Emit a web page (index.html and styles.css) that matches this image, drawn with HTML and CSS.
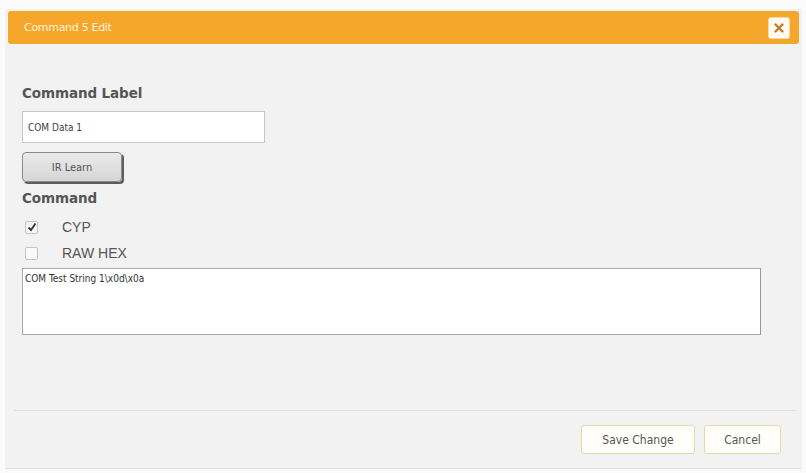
FILE: index.html
```html
<!DOCTYPE html>
<html lang="en">
<head>
    <meta charset="UTF-8">
    <title>Command 5 Edit</title>
    <link rel="stylesheet" href="styles.css">
</head>
<body>
    <div class="dialog">
        <div class="dialog-title">
            <span>Command 5 Edit</span>
            <button class="close-btn" title="Close">
                <svg width="12" height="12" viewBox="0 0 12 12">
                    <path d="M2.5 2.5 L9.5 9.5 M9.5 2.5 L2.5 9.5" stroke="#c9772a" stroke-width="2.4" stroke-linecap="round"/>
                </svg>
            </button>
        </div>

        <div class="dialog-body">
            <label class="field-label">Command Label</label>
            <input class="text-input" type="text" value="COM Data 1">

            <button class="learn-btn">IR Learn</button>

            <label class="field-label command-label">Command</label>
            <div class="check-row first">
                <span class="check checked">
                    <svg width="10" height="10" viewBox="0 0 10 10">
                        <path d="M1.5 5.5 L4 8 L8.5 1.5" stroke="#333" stroke-width="1.8" fill="none"/>
                    </svg>
                </span>
                <span>CYP</span>
            </div>
            <div class="check-row">
                <span class="check"></span>
                <span>RAW HEX</span>
            </div>

            <textarea class="command-text">COM Test String 1\x0d\x0a</textarea>
        </div>

        <div class="dialog-footer">
            <button class="footer-btn save">Save Change</button>
            <button class="footer-btn cancel">Cancel</button>
        </div>
    </div>
</body>
</html>
```

FILE: styles.css
```css
body {
    margin: 0;
    background: #fbfbfb;
    font-family: "DejaVu Sans", Verdana, sans-serif;
    color: #444;
}
.dialog {
    margin: 9px 4px 0 5px;
    height: 459px;
    background: #f2f2f2;
    border-bottom: 1px solid #e2e2e2;
    display: flex;
    flex-direction: column;
}
.dialog-title {
    margin: 2px 3px 0 3px;
    height: 33px;
    background: #f5a72b;
    border-radius: 3px;
    display: flex;
    align-items: center;
    justify-content: space-between;
    padding: 0 9px 0 16px;
    color: #fdf1dc;
    font-size: 11px;
    letter-spacing: -0.3px;
}
.close-btn {
    width: 22px;
    height: 22px;
    border: 1px solid #f8d9a8;
    border-radius: 3px;
    background: #fffaf2;
    padding: 0;
    display: flex;
    align-items: center;
    justify-content: center;
}
.dialog-body {
    padding: 41px 0 0 17px;
    display: flex;
    flex-direction: column;
    align-items: flex-start;
    flex: 1;
}
.field-label {
    font-size: 13.5px;
    font-weight: bold;
    color: #555;
    letter-spacing: -0.1px;
}
.text-input {
    margin-top: 10px;
    width: 243px;
    height: 32px;
    box-sizing: border-box;
    border: 1px solid #c8c8c8;
    background: #fff;
    padding: 0 5px;
    font-family: "DejaVu Sans Condensed", "DejaVu Sans", sans-serif;
    font-size: 10px;
    color: #444;
}
.learn-btn {
    margin-top: 9px;
    width: 100px;
    height: 30px;
    border: 1px solid #8a8a8a;
    border-radius: 4px;
    background: linear-gradient(#eaeaea, #d6d6d6);
    box-shadow: 2px 2px 0 #5e5e5e;
    font-family: "DejaVu Sans Condensed", "DejaVu Sans", sans-serif;
    font-size: 11px;
    color: #555;
}
.command-label {
    margin-top: 8px;
}
.check-row {
    display: flex;
    align-items: center;
    gap: 24px;
    height: 26px;
    padding-left: 3px;
    font-family: "Liberation Sans", Arial, sans-serif;
    font-size: 14px;
    color: #555;
}
.check-row.first {
    margin-top: 8px;
}
.check {
    width: 11px;
    height: 11px;
    border: 1px solid #c4c4c4;
    border-radius: 2px;
    background: #fafafa;
    display: flex;
    align-items: center;
    justify-content: center;
}
.check.checked {
    background: #f6f6f6;
}
.command-text {
    margin-top: 2px;
    width: 739px;
    height: 67px;
    box-sizing: border-box;
    border: 1px solid #aaa;
    border-right-color: #999;
    background: #fff;
    padding: 4px 2px;
    resize: none;
    font-family: "DejaVu Sans Condensed", "DejaVu Sans", sans-serif;
    font-size: 10px;
    color: #333;
}
.dialog-footer {
    margin: 0 6px 0 9px;
    border-top: 1px solid #e0e0e0;
    height: 57px;
    display: flex;
    justify-content: flex-end;
    align-items: center;
    gap: 9px;
    padding-right: 15px;
}
.footer-btn {
    height: 29px;
    padding: 0;
    border: 1px solid #e6d9a8;
    border-radius: 3px;
    background: #fffefa;
    font-family: "DejaVu Sans Condensed", "DejaVu Sans", sans-serif;
    font-size: 12px;
    color: #555;
}
.footer-btn.save {
    width: 114px;
}
.footer-btn.cancel {
    width: 77px;
}
```
